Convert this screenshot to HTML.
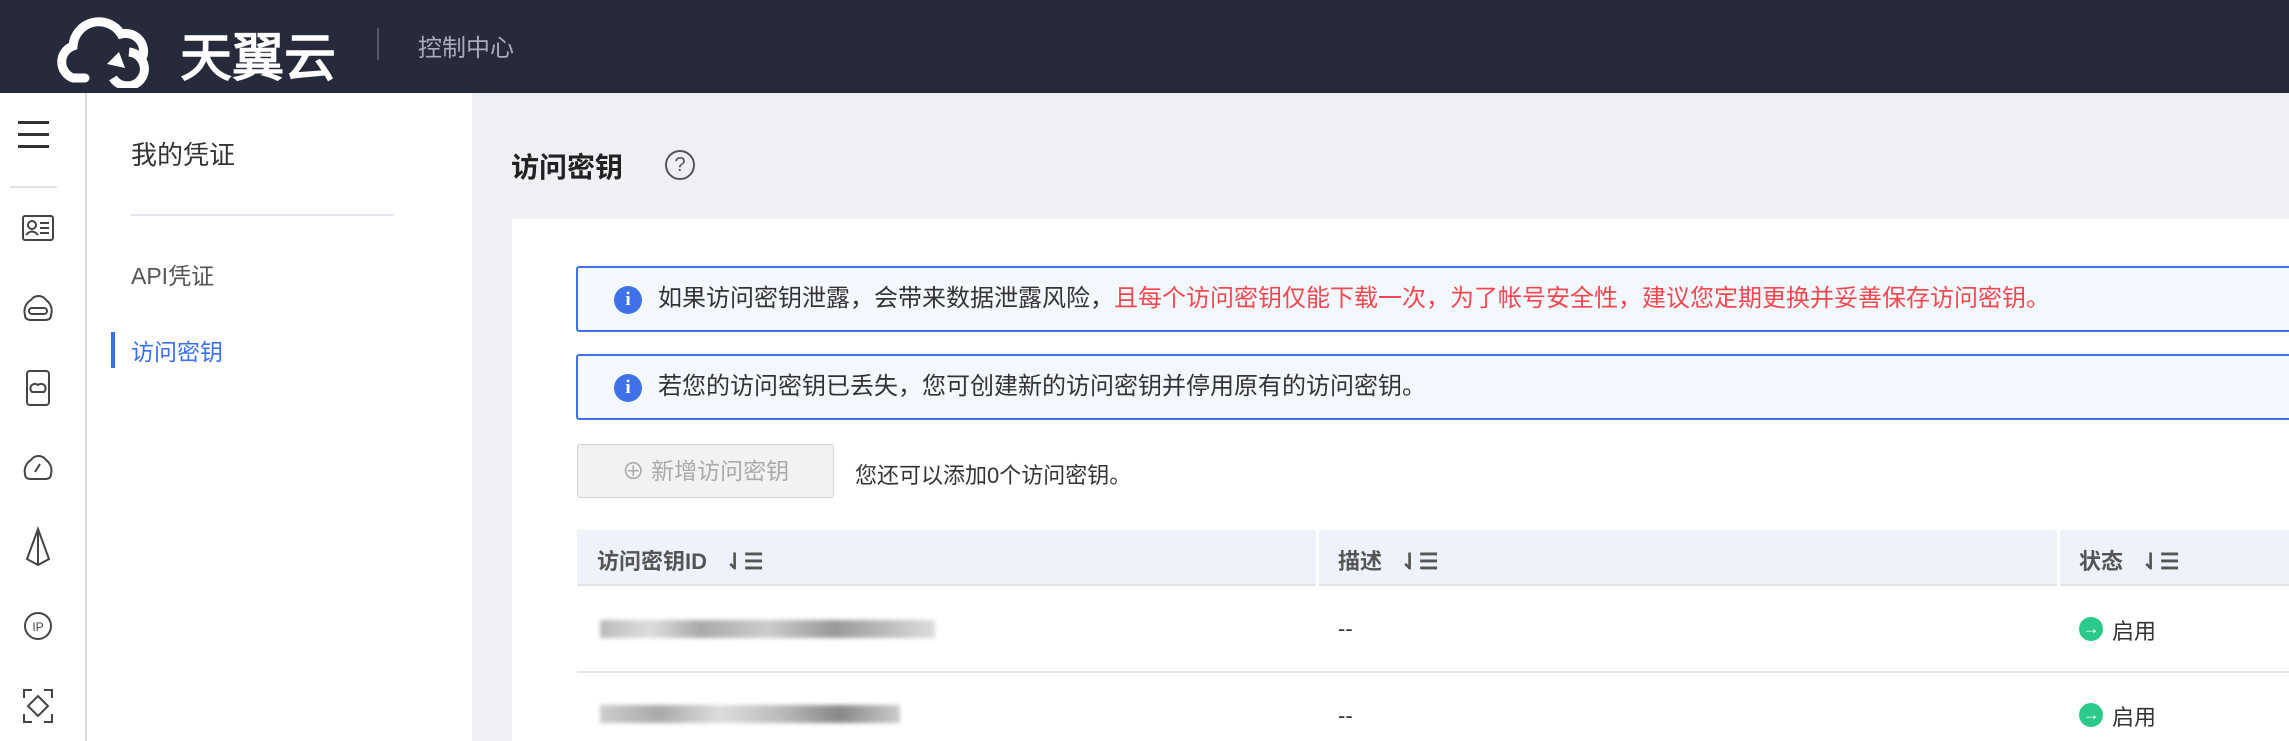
<!DOCTYPE html>
<html style="height:741px;overflow:hidden"><head><meta charset="utf-8"><style>
*{margin:0;padding:0;box-sizing:border-box}
body{width:2289px;height:741px;overflow:hidden;background:#eef0f4;font-family:"Liberation Sans","Noto Sans CJK SC",sans-serif;position:relative}
.a{position:absolute}
.hdr{left:0;top:0;width:2289px;height:93px;background:#272a3b}
.side{left:0;top:93px;width:87px;height:648px;background:#fff;border-right:2px solid #d9d9dc}
.nav{left:87px;top:93px;width:385px;height:648px;background:#fff}
.card{left:512px;top:219px;width:1800px;height:530px;background:#fff}
.alert{left:576px;width:1760px;height:66px;background:#f3f8fe;border:2px solid #3f72e8;border-radius:3px;font-size:24px;color:#333;line-height:62px;padding-left:80px}
.info{position:absolute;left:36px;top:18px;width:28px;height:28px;border-radius:50%;background:#3f72e8;color:#fff;font-size:19px;font-weight:bold;line-height:28px;text-align:center;font-family:"Liberation Serif",serif}
.th{font-size:22px;font-weight:bold;color:#555}
.td{font-size:22px;color:#333}
.ic{stroke:#444;fill:none;stroke-width:2}
</style></head><body>
<div class="a hdr">
<svg class="a" style="left:55px;top:8px" width="100" height="80" viewBox="0 0 100 80"><path d="M30 70 H18 A17 17 0 0 1 18 38 A26 26 0 0 1 66 26 A18 18 0 0 1 88 48" stroke="#fff" stroke-width="9" fill="none" stroke-linecap="round"/><path d="M74 44 A17 17 0 1 1 58 70" stroke="#fff" stroke-width="9" fill="none"/><path d="M52 56 L64 44 L70 60 Z" fill="#fff"/></svg>
<div class="a" style="left:180px;top:16px;font-size:52px;color:#fff;-webkit-text-stroke:1.5px #fff">天翼云</div>
<div class="a" style="left:377px;top:28px;width:2px;height:32px;background:#555a6a"></div>
<div class="a" style="left:418px;top:28px;font-size:24px;color:#a9adba">控制中心</div>
</div>
<div class="a side">
<div class="a" style="left:18px;top:28px;width:31px;height:3px;background:#333"></div>
<div class="a" style="left:18px;top:40px;width:31px;height:3px;background:#333"></div>
<div class="a" style="left:18px;top:52px;width:31px;height:3px;background:#333"></div>
<div class="a" style="left:10px;top:93px;width:47px;height:2px;background:#e0e3ea"></div>
<svg class="a" style="left:21px;top:120px" width="34" height="520">
<rect class="ic" x="2" y="3" width="30" height="24" rx="2" stroke-width="1.5"/><circle class="ic" cx="11" cy="12" r="4" stroke-width="1.3"/><path class="ic" d="M5 22 Q11 15 17 22 M19 10h9M19 15h9M19 20h9" stroke-width="1.3"/>
<path class="ic" d="M4 102 A13 13 0 0 1 10 87 A9 9 0 0 1 25 87 A13 13 0 0 1 30 102 Q30 107 24 107 H10 Q4 107 4 102Z" stroke-width="1.5"/><rect class="ic" x="8" y="95" width="18" height="6" rx="3" stroke-width="1.3"/>
<rect class="ic" x="6" y="158" width="22" height="34" rx="3" stroke-width="1.5"/><path class="ic" d="M11 179 A4 4 0 0 1 17 172 A4 4 0 0 1 23 179Z" stroke-width="1.2"/>
<path class="ic" d="M4 261 A13 13 0 0 1 10 247 A9 9 0 0 1 25 247 A13 13 0 0 1 30 261 Q30 266 24 266 H10 Q4 266 4 261Z M14 259 L19 251" stroke-width="1.5"/>
<path class="ic" d="M17 316 L6 346 L17 352 L28 346 Z M17 316 V352" stroke-width="1.5"/>
<circle class="ic" cx="17" cy="413" r="13" stroke-width="1.5"/><text x="17" y="418" font-size="12" text-anchor="middle" fill="#444" font-family="Liberation Sans">IP</text>
<path class="ic" d="M3 485v-8h8M23 477h8v8M31 501v8h-8M11 509H3v-8M17 483l10 10-10 10-10-10z" stroke-width="1.8"/>
</svg>
</div>
<div class="a nav">
<div class="a" style="left:44px;top:42px;font-size:26px;color:#333">我的凭证</div>
<div class="a" style="left:44px;top:121px;width:263px;height:2px;background:#e3e6ee"></div>
<div class="a" style="left:44px;top:164px;font-size:23px;color:#555">API凭证</div>
<div class="a" style="left:24px;top:239px;width:4px;height:36px;background:#3a6ff0"></div>
<div class="a" style="left:44px;top:240px;font-size:23px;color:#3a6ff0">访问密钥</div>
</div>
<div class="a" style="left:511px;top:146px;font-size:28px;font-weight:bold;color:#222">访问密钥</div>
<div class="a" style="left:665px;top:150px;width:30px;height:30px;border:2px solid #555;border-radius:50%;font-size:20px;line-height:26px;text-align:center;color:#555">?</div>
<div class="a card"></div>
<div class="a alert" style="top:266px"><span class="info">i</span>如果访问密钥泄露，会带来数据泄露风险，<span style="color:#f4474e">且每个访问密钥仅能下载一次，为了帐号安全性，建议您定期更换并妥善保存访问密钥。</span></div>
<div class="a alert" style="top:354px"><span class="info">i</span>若您的访问密钥已丢失，您可创建新的访问密钥并停用原有的访问密钥。</div>
<div class="a" style="left:577px;top:444px;width:257px;height:54px;background:#f2f2f3;border:1px solid #d4d4d4;border-radius:3px;font-size:23px;color:#aaa;line-height:52px;text-align:center">⊕ 新增访问密钥</div>
<div class="a td" style="left:855px;top:458px">您还可以添加0个访问密钥。</div>
<div class="a" style="left:577px;top:530px;width:1712px;height:56px;background:#eef2fa;border-bottom:2px solid #e2e4ea"></div>
<div class="a" style="left:1316px;top:530px;width:3px;height:56px;background:#fff"></div>
<div class="a" style="left:2057px;top:530px;width:3px;height:56px;background:#fff"></div>
<div class="a th" style="left:597px;top:544px">访问密钥ID&nbsp;&nbsp;&nbsp;⇃☰</div>
<div class="a th" style="left:1338px;top:544px">描述&nbsp;&nbsp;&nbsp;⇃☰</div>
<div class="a th" style="left:2079px;top:544px">状态&nbsp;&nbsp;&nbsp;⇃☰</div>
<div class="a" style="left:577px;top:671px;width:1712px;height:2px;background:#e2e4ea"></div>
<div class="a" style="left:600px;top:620px;width:335px;height:18px;background:linear-gradient(90deg,#bbb,#ddd 15%,#aaa 30%,#ccc 50%,#999 70%,#bbb 85%,#ddd);filter:blur(2px)"></div>
<div class="a" style="left:600px;top:705px;width:300px;height:18px;background:linear-gradient(90deg,#ccc,#aaa 20%,#ddd 40%,#bbb 60%,#888 80%,#ccc);filter:blur(2px)"></div>
<div class="a td" style="left:1338px;top:616px">--</div>
<div class="a td" style="left:1338px;top:703px">--</div>
<div class="a" style="left:2079px;top:617px;width:24px;height:24px;border-radius:50%;background:#2bc98a;color:#fff;font-size:17px;line-height:24px;text-align:center;font-weight:bold">→</div>
<div class="a td" style="left:2112px;top:614px">启用</div>
<div class="a" style="left:2079px;top:703px;width:24px;height:24px;border-radius:50%;background:#2bc98a;color:#fff;font-size:17px;line-height:24px;text-align:center;font-weight:bold">→</div>
<div class="a td" style="left:2112px;top:700px">启用</div>
</body></html>
